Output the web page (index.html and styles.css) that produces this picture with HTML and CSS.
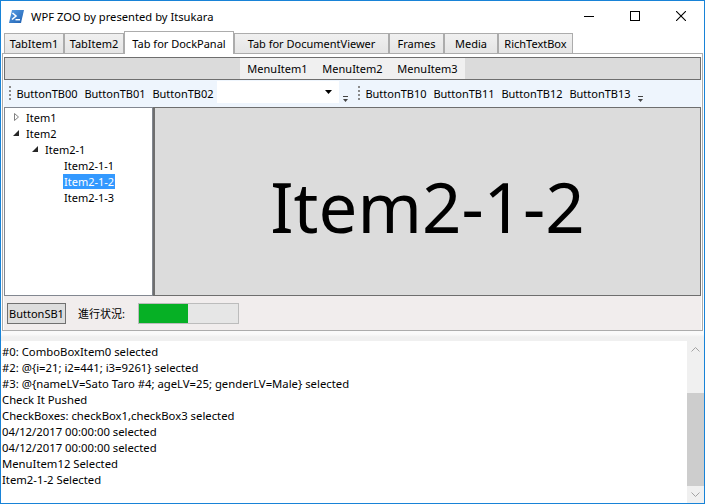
FILE: index.html
```html
<!DOCTYPE html>
<html>
<head>
<meta charset="utf-8">
<link rel="stylesheet" href="styles.css">
</head>
<body>
<div class="window">
  <div class="titlebar">
    <svg class="app-icon" width="15" height="13" viewBox="0 0 15 13">
      <defs>
        <linearGradient id="ig" x1="0" y1="0" x2="1" y2="1">
          <stop offset="0" stop-color="#5aa0e6"/>
          <stop offset="1" stop-color="#1d5fb0"/>
        </linearGradient>
      </defs>
      <polygon points="3,0 15,0 12,13 0,13" fill="url(#ig)"/>
      <polyline points="3.5,3 7,6 3,9.5" fill="none" stroke="#fff" stroke-width="1.6"/>
      <rect x="6.5" y="9" width="4.5" height="1.4" fill="#fff"/>
    </svg>
    <span class="title">WPF ZOO by presented by Itsukara</span>
    <div class="caption">
      <div class="cap-btn"><svg width="10" height="10" viewBox="0 0 10 10"><rect x="0" y="5" width="10" height="1" fill="#000"/></svg></div>
      <div class="cap-btn"><svg width="10" height="10" viewBox="0 0 10 10"><rect x="0.5" y="0.5" width="9" height="9" fill="none" stroke="#000" stroke-width="1"/></svg></div>
      <div class="cap-btn"><svg width="10" height="10" viewBox="0 0 10 10"><path d="M0,0 L10,10 M10,0 L0,10" stroke="#000" stroke-width="1.1"/></svg></div>
    </div>
  </div>

  <div class="tabstrip">
    <div class="tab t1">TabItem1</div>
    <div class="tab t2">TabItem2</div>
    <div class="tab tab-selected t3">Tab for DockPanal</div>
    <div class="tab t4">Tab for DocumentViewer</div>
    <div class="tab t5">Frames</div>
    <div class="tab t6">Media</div>
    <div class="tab t7">RichTextBox</div>
  </div>

  <div class="panel">
    <div class="menubar">
      <div class="menu-items">
        <div class="menu-item">MenuItem1</div>
        <div class="menu-item">MenuItem2</div>
        <div class="menu-item">MenuItem3</div>
      </div>
    </div>

    <div class="tray">
      <div class="toolbar tb-first">
        <div class="grip"></div>
        <div class="tb-btn">ButtonTB00</div>
        <div class="tb-btn">ButtonTB01</div>
        <div class="tb-btn">ButtonTB02</div>
        <div class="combo">
          <svg class="combo-arrow" width="7" height="4" viewBox="0 0 7 4"><polygon points="0,0 7,0 3.5,4" fill="#000"/></svg>
        </div>
        <div class="overflow"><svg width="7" height="6" viewBox="0 0 7 6"><rect x="1" y="0" width="5" height="1" fill="#444"/><polygon points="1,3 6,3 3.5,6" fill="#444"/></svg></div>
      </div>
      <div class="toolbar tb-second">
        <div class="grip"></div>
        <div class="tb-btn">ButtonTB10</div>
        <div class="tb-btn">ButtonTB11</div>
        <div class="tb-btn">ButtonTB12</div>
        <div class="tb-btn">ButtonTB13</div>
        <div class="overflow"><svg width="7" height="6" viewBox="0 0 7 6"><rect x="1" y="0" width="5" height="1" fill="#444"/><polygon points="1,3 6,3 3.5,6" fill="#444"/></svg></div>
      </div>
    </div>

    <div class="main">
      <div class="tree">
        <div class="node lvl0">
          <span class="toggle"><svg width="5" height="8" viewBox="0 0 5 8"><polygon points="0.5,0.5 4.5,4 0.5,7.5" fill="#fff" stroke="#818181" stroke-width="1"/></svg></span>
          <span class="label">Item1</span>
        </div>
        <div class="node lvl0">
          <span class="toggle"><svg width="6" height="6" viewBox="0 0 6 6"><polygon points="6,0 6,6 0,6" fill="#262626"/></svg></span>
          <span class="label">Item2</span>
        </div>
        <div class="node lvl1">
          <span class="toggle"><svg width="6" height="6" viewBox="0 0 6 6"><polygon points="6,0 6,6 0,6" fill="#262626"/></svg></span>
          <span class="label">Item2-1</span>
        </div>
        <div class="node lvl2">
          <span class="toggle"></span>
          <span class="label">Item2-1-1</span>
        </div>
        <div class="node lvl2">
          <span class="toggle"></span>
          <span class="label selected">Item2-1-2</span>
        </div>
        <div class="node lvl2">
          <span class="toggle"></span>
          <span class="label">Item2-1-3</span>
        </div>
      </div>
      <div class="viewer">Item2-1-2</div>
    </div>

    <div class="statusbar">
      <div class="sb-btn">ButtonSB1</div>
      <div class="sb-label">進行状況:</div>
      <div class="progress"><div class="progress-fill" style="width:50%"></div></div>
    </div>
  </div>

  <div class="splitter"></div>

  <div class="log">
    <div class="log-text">
      <div>#0: ComboBoxItem0 selected</div>
      <div>#2: @{i=21; i2=441; i3=9261} selected</div>
      <div>#3: @{nameLV=Sato Taro #4; ageLV=25; genderLV=Male} selected</div>
      <div>Check It Pushed</div>
      <div>CheckBoxes: checkBox1,checkBox3 selected</div>
      <div>04/12/2017 00:00:00 selected</div>
      <div>04/12/2017 00:00:00 selected</div>
      <div>MenuItem12 Selected</div>
      <div>Item2-1-2 Selected</div>
    </div>
    <div class="vscroll">
      <div class="sc-arrow"><svg width="9" height="5" viewBox="0 0 9 5"><polyline points="0.5,4.5 4.5,0.5 8.5,4.5" fill="none" stroke="#a3a3a3" stroke-width="1"/></svg></div>
      <div class="sc-track"><div class="sc-thumb"></div></div>
      <div class="sc-arrow"><svg width="9" height="5" viewBox="0 0 9 5"><polyline points="0.5,0.5 4.5,4.5 8.5,0.5" fill="none" stroke="#a3a3a3" stroke-width="1"/></svg></div>
    </div>
  </div>
</div>
</body>
</html>
```

FILE: styles.css
```css
* { box-sizing: border-box; margin: 0; padding: 0; }
html, body { width: 705px; height: 504px; overflow: hidden; background: #fff; }
body { font-family: "Noto Sans", sans-serif; font-size: 11px; color: #000; }

.window {
  width: 705px; height: 504px;
  border: 1px solid #1883d7;
  display: flex; flex-direction: column;
  background: #fff;
}

/* title bar */
.titlebar { height: 30px; flex: none; display: flex; align-items: center; }
.app-icon { margin-left: 8px; flex: none; }
.title { margin-left: 7px; font-size: 11.2px; }
.caption { margin-left: auto; display: flex; height: 100%; }
.cap-btn { width: 46px; height: 100%; display: flex; align-items: center; justify-content: center; }

/* tabs */
.tabstrip { height: 22px; flex: none; display: flex; align-items: flex-end; padding-left: 3px; position: relative; z-index: 1; }
.tab {
  height: 20px;
  border: 1px solid #acacac; border-bottom: none;
  background: linear-gradient(#f0f0f0, #e5e5e5);
  display: flex; align-items: center; justify-content: center;
  white-space: nowrap;
}
.tab-selected { height: 23px; margin-bottom: -1px; background: #fff; }
.t1 { width: 60px; }
.t2 { width: 60px; }
.t3 { width: 110px; }
.t4 { width: 155px; }
.t5 { width: 55px; }
.t6 { width: 54px; }
.t7 { width: 75px; }

/* panel */
.panel {
  height: 278px; flex: none;
  margin: 0 1px;
  border: 1px solid #acacac;
  padding: 3px 1px 0 1px;
  display: flex; flex-direction: column;
  background: #fff;
}

.menubar {
  height: 23px; flex: none;
  border: 1px solid #6e6e6e;
  background: #dbdbdb;
  display: flex; justify-content: center;
}
.menu-items { display: flex; background: #f0f0f0; }
.menu-item { width: 75px; display: flex; align-items: center; justify-content: center; }

.tray { height: 27px; flex: none; background: #eef5fd; display: flex; align-items: center; }
.toolbar { display: flex; align-items: center; height: 100%; }
.tb-first { padding-left: 5px; }
.tb-second { margin-left: 7px; }
.grip {
  width: 4px; height: 15px; flex: none;
  background: linear-gradient(#8a8a8a 0 2px, transparent 2px 4px) 0 0 / 2px 4px repeat-y;
}
.tb-btn { width: 68px; text-align: center; white-space: nowrap; }
.combo { width: 122px; height: 22px; align-self: flex-start; margin-top: 1px; background: #fff; display: flex; align-items: center; justify-content: flex-end; padding-right: 7px; }
.overflow { width: 12px; height: 100%; display: flex; align-items: flex-end; justify-content: center; padding-bottom: 5px; }
.tb-second .overflow { width: 13px; }

.main { height: 189px; flex: none; display: flex; }
.tree {
  width: 149px; flex: none;
  border: 1px solid #828790;
  background: #fff;
  padding: 1px 0 0 2px;
}
.node { display: flex; align-items: center; height: 16px; }
.lvl1 { padding-left: 19px; }
.lvl2 { padding-left: 38px; }
.toggle { width: 18px; height: 16px; flex: none; display: flex; align-items: center; justify-content: center; }
.label { padding: 0 1px; line-height: 15px; height: 15px; white-space: nowrap; }
.label.selected { background: #3399ff; color: #fff; }

.viewer {
  flex: 1;
  background: #dcdcdc;
  border: 1px solid #6e6e6e; border-left-width: 2px;
  display: flex; align-items: center; justify-content: center;
  font-size: 69px; line-height: 1; padding-top: 10px;
}

.statusbar { flex: 1; background: #f1eded; display: flex; align-items: center; padding-left: 3px; }
.sb-btn { width: 59px; height: 21px; border: 1px solid #707070; background: #dddddd; display: flex; align-items: center; justify-content: center; }
.sb-label { margin-left: 12px; font-family: "Noto Sans", "Noto Sans CJK JP", sans-serif; }
.progress { margin-left: 13px; width: 101px; height: 21px; border: 1px solid #bcbcbc; background: #e6e6e6; }
.progress-fill { height: 100%; background: #06b025; }

.splitter { height: 10px; flex: none; background: linear-gradient(#fafafa 0 3px, #f0f0f0 6px); }

.log { flex: 1; display: flex; min-height: 0; }
.log-text { flex: 1; padding: 3px 0 0 1px; line-height: 16px; font-size: 11.3px; white-space: nowrap; overflow: hidden; }
.vscroll { width: 17px; flex: none; background: #f0f0f0; display: flex; flex-direction: column; }
.sc-arrow { height: 17px; flex: none; display: flex; align-items: center; justify-content: center; }
.sc-track { flex: 1; display: flex; flex-direction: column; justify-content: flex-end; }
.sc-thumb { height: 93px; background: #cdcdcd; }
```
